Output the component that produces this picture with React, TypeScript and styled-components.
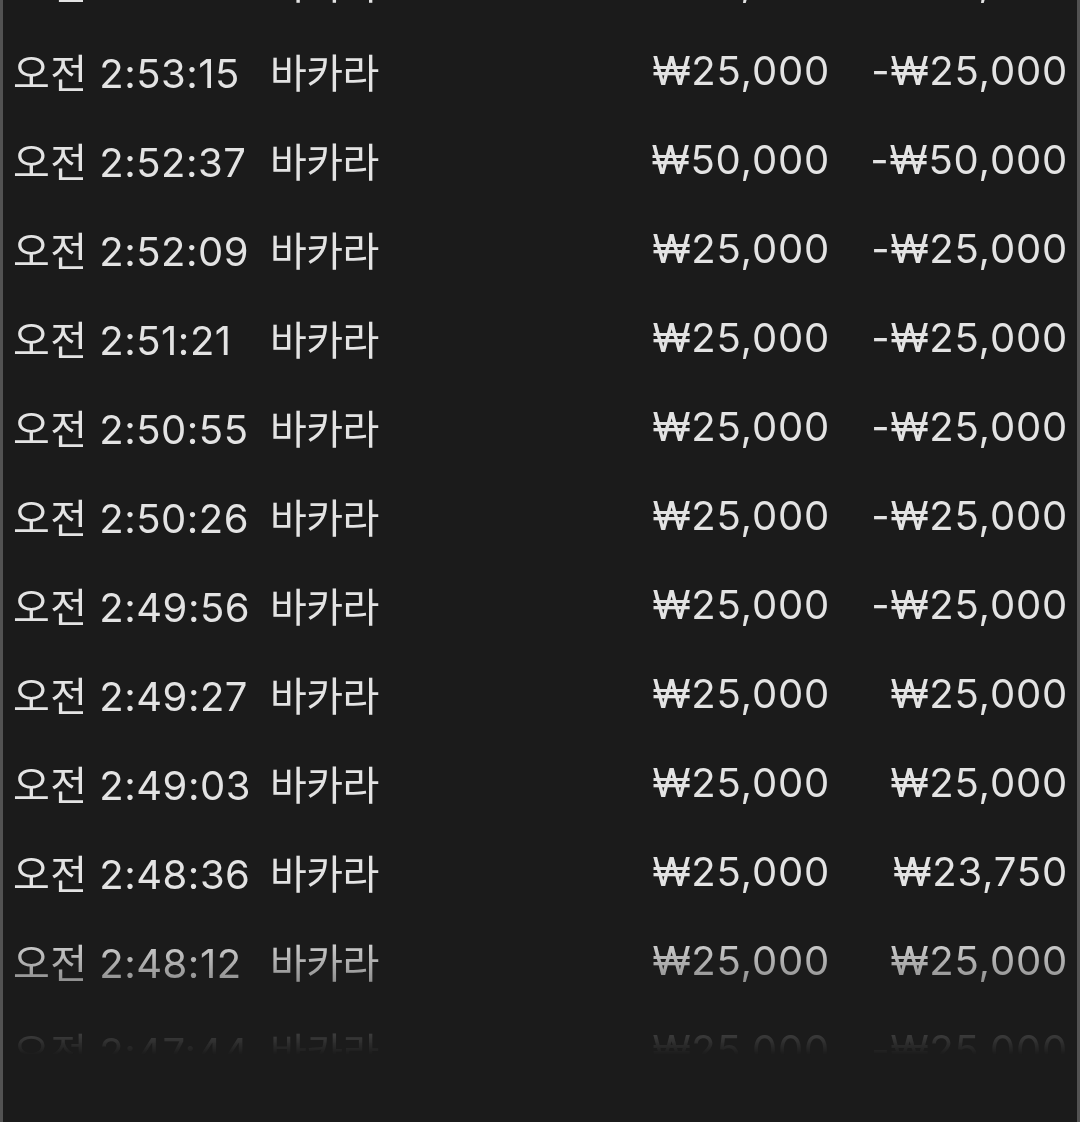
import React from "react";
import styled, { createGlobalStyle } from "styled-components";

const GlobalStyle = createGlobalStyle`
  html, body {
    margin: 0;
    padding: 0;
    background: #1b1b1b;
  }
`;

interface BetRow {
  time: string;
  game: string;
  amount: string;
  result: string;
}

const rows: BetRow[] = [
  { time: "오전 2:53:42", game: "바카라", amount: "₩25,000", result: "-₩25,000" },
  { time: "오전 2:53:15", game: "바카라", amount: "₩25,000", result: "-₩25,000" },
  { time: "오전 2:52:37", game: "바카라", amount: "₩50,000", result: "-₩50,000" },
  { time: "오전 2:52:09", game: "바카라", amount: "₩25,000", result: "-₩25,000" },
  { time: "오전 2:51:21", game: "바카라", amount: "₩25,000", result: "-₩25,000" },
  { time: "오전 2:50:55", game: "바카라", amount: "₩25,000", result: "-₩25,000" },
  { time: "오전 2:50:26", game: "바카라", amount: "₩25,000", result: "-₩25,000" },
  { time: "오전 2:49:56", game: "바카라", amount: "₩25,000", result: "-₩25,000" },
  { time: "오전 2:49:27", game: "바카라", amount: "₩25,000", result: "₩25,000" },
  { time: "오전 2:49:03", game: "바카라", amount: "₩25,000", result: "₩25,000" },
  { time: "오전 2:48:36", game: "바카라", amount: "₩25,000", result: "₩23,750" },
  { time: "오전 2:48:12", game: "바카라", amount: "₩25,000", result: "₩25,000" },
  { time: "오전 2:47:44", game: "바카라", amount: "₩25,000", result: "-₩25,000" },
];

const Screen = styled.div`
  width: 1080px;
  height: 1122px;
  box-sizing: border-box;
  overflow: hidden;
  background: #1b1b1b;
  border-left: 3px solid #525252;
  border-right: 3px solid #525252;
`;

/* list is scrolled a little: the first row is half hidden, the bottom fades out */
const List = styled.div`
  margin-top: -63px;
  display: flex;
  flex-direction: column;
  -webkit-mask-image: linear-gradient(
    to bottom,
    #000 0,
    #000 993px,
    transparent 1118px
  );
  mask-image: linear-gradient(to bottom, #000 0, #000 993px, transparent 1118px);
`;

const Row = styled.div`
  height: 89px;
  display: grid;
  grid-template-columns: 257px 1fr 240px 238px;
  align-items: center;
  padding: 0 9px 0 10px;
  font-family: Inter, "Noto Sans CJK KR", sans-serif;
  font-size: 40px;
  color: #e3e3e3;
  white-space: nowrap;
`;

const Cell = styled.span<{ $align?: "left" | "right"; $spacing?: number }>`
  text-align: ${(p) => p.$align ?? "left"};
  letter-spacing: ${(p) => p.$spacing ?? 0}px;
`;

export default function App() {
  return (
    <>
      <GlobalStyle />
      <Screen>
        <List>
          {rows.map((row, i) => (
            <Row key={i}>
              <Cell $spacing={0.5}>{row.time}</Cell>
              <Cell $spacing={-0.5}>{row.game}</Cell>
              <Cell $align="right" $spacing={0.8}>
                {row.amount}
              </Cell>
              <Cell $align="right" $spacing={0.8}>
                {row.result}
              </Cell>
            </Row>
          ))}
        </List>
      </Screen>
    </>
  );
}
